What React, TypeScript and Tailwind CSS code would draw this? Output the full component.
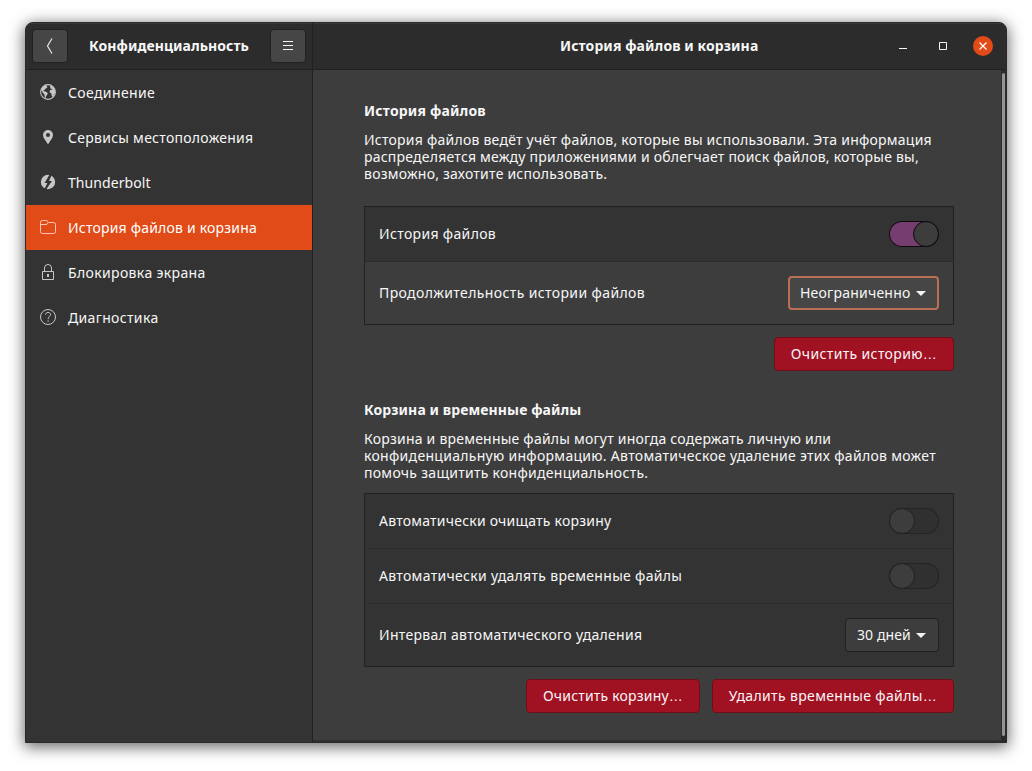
import React from "react";

function Globe() {
  return (
    <svg width="16" height="16" viewBox="0 0 16 16" fill="#c6c6c5">
      <circle cx="8" cy="8" r="7.400" fill="none" stroke="#c6c6c5" strokeWidth="1.100" />
      <path d="M1.200 5.400 3 2.600 5.400 1.200 7.200 1.600 6.800 2.600 7.400 3.400 6.400 4.200 5.400 4.800 4.600 6 3.600 6.200 3.800 7.200 5.600 7.400 7.800 9 7.200 10.800 6 12.200 5.800 14 4.800 13.400 4.400 10.600 2.800 8.800 1.800 6.800Z" />
      <path d="M10.400 1.400 12.800 2.600 14.600 5.400 15.200 8.400 14 11.400 12.400 13 11.600 11.600 11.600 9.800 9.800 8.400 9.600 6.800 10.800 5.800 12.200 6 11.800 4.800 10.600 4.800 10.200 3.400Z" />
    </svg>
  );
}

function Pin() {
  return (
    <svg width="16" height="16" viewBox="0 0 16 16" fill="#c6c6c5">
      <path fillRule="evenodd" d="M8 1a5 5 0 0 0-5 5c0 3.200 2.800 5.600 4.200 8.200.2.500.4.800.8.800s.6-.3.8-.8C10.200 11.600 13 9.200 13 6a5 5 0 0 0-5-5Zm0 3a2 2 0 1 1 0 4 2 2 0 0 1 0-4Z" />
    </svg>
  );
}

function Bolt() {
  return (
    <svg width="16" height="16" viewBox="0 0 16 16">
      <circle cx="8" cy="8" r="7.200" fill="#c6c6c5" />
      <path d="M9.800 0 4.600 8.900H7.400L4 16H5.800L12 7.100H9L12 .5Z" fill="#333333" />
    </svg>
  );
}

function Folder() {
  return (
    <svg width="16" height="16" viewBox="0 0 16 16" fill="none" stroke="#f8c9b8">
      <path d="M.5 12.500v-9a2 2 0 0 1 2-2h4a1 1 0 0 1 1 1v0a1 1 0 0 0 1 1h5a2 2 0 0 1 2 2v7a2 2 0 0 1-2 2h-11a2 2 0 0 1-2-2Z" />
      <path d="M.5 5.500H6a1.500 1.500 0 0 0 1.500-1.500" />
    </svg>
  );
}

function Lock() {
  return (
    <svg width="16" height="16" viewBox="0 0 16 16" fill="none" stroke="#c6c6c5">
      <path d="M2.500 7.500h11v8h-11zM4.500 7.500V4a3.500 3.500 0 0 1 7 0v3.500" />
      <path d="M7 10h2v3H7z" fill="#c6c6c5" stroke="none" />
    </svg>
  );
}

function Help() {
  return (
    <svg width="16" height="16" viewBox="0 0 16 16" fill="none" stroke="#c6c6c5">
      <circle cx="8" cy="8" r="7.500" />
      <path d="M5.600 5.600c.1-1.300 1-2.200 2.400-2.200s2.500.8 2.500 2.200c0 1.800-2.400 1.900-2.400 4.500" />
      <path d="M7.500 11.500h1.200v1.200H7.500z" fill="#c6c6c5" stroke="none" />
    </svg>
  );
}

const nav = [
  { label: "Соединение", Icon: Globe, cls: "tracking-[0.38px]" },
  { label: "Сервисы местоположения", Icon: Pin, cls: "tracking-[0.27px]" },
  { label: "Thunderbolt", Icon: Bolt, cls: "tracking-[0.08px]" },
  { label: "История файлов и корзина", Icon: Folder, cls: "tracking-[0.2px]", active: true },
  { label: "Блокировка экрана", Icon: Lock, cls: "tracking-[0.36px]" },
  { label: "Диагностика", Icon: Help, cls: "tracking-[0.34px]" },
];

function Switch({ on = false }: { on?: boolean }) {
  return (
    <div
      className={
        on
          ? "flex h-[26px] w-[50px] justify-end rounded-full bg-[#763e70] shadow-[inset_0_0_0_1px_#0b0b0b]"
          : "flex h-[26px] w-[50px] rounded-full bg-[#303030] shadow-[inset_0_0_0_1px_#242424]"
      }
    >
      <div
        className={
          on
            ? "size-[26px] rounded-full border border-[#0b0b0b] bg-[#3d3d3d]"
            : "size-[26px] rounded-full border border-[#212121] bg-[#3d3d3d]"
        }
      />
    </div>
  );
}

function Caret() {
  return (
    <svg width="10" height="5" viewBox="0 0 10 5" fill="#f3f3f2">
      <path d="M0 0h10L5 5Z" />
    </svg>
  );
}

function Row({ label, cls, children, light, tall }: { label: string; cls: string; children: React.ReactNode; light?: boolean; tall?: boolean }) {
  return (
    <div className={`flex items-center justify-between px-[14px] ${tall ? "h-[62px]" : "h-[55px]"} ${light ? "bg-[#3d3d3d]" : "bg-[#333333]"}`}>
      <span className={`${cls} ${tall ? "pb-px" : "pb-[2px]"}`}>{label}</span>
      {children}
    </div>
  );
}

function Danger({ label, size, cls }: { label: string; size: string; cls: string }) {
  return (
    <button className={`flex h-[34px] items-center justify-center rounded-[4px] border border-[#6f0d18] bg-[#a01122] pb-px text-[#f8f6f7] ${size}`}>
      <span className={cls}>
        {label}
        <span className="font-['Liberation_Sans',sans-serif] leading-none">…</span>
      </span>
    </button>
  );
}

export default function App() {
  return (
    <div className="h-[771px] w-[1032px] overflow-hidden bg-white pt-[22px] pl-[25px] font-['Noto_Sans',sans-serif] text-[14px] leading-[17px] whitespace-nowrap text-[#f7f7f7]">
      <div className="flex h-[721px] w-[982px] flex-col overflow-hidden rounded-t-[8px] border border-[#2b292a] bg-[#333333] shadow-[0_3px_15px_1px_rgba(0,0,0,0.6)]">
        <header className="flex h-[47px] shrink-0 border-b border-[#212121] bg-[#2c2c2c] shadow-[inset_0_1px_0_#393939]">
          <div className="flex w-[287px] items-center justify-between border-r border-[#212121] pr-[6px] pl-[6px]">
            <button className="flex h-[34px] w-[36px] items-center justify-center rounded-[4px] border border-[#212121] bg-[#464646]">
              <svg width="16" height="16" viewBox="0 0 16 16" fill="none" stroke="#e8e8e8" strokeWidth="1.200"><path d="M10 .5 5.500 8l4.500 7.500" /></svg>
            </button>
            <span className="pb-[2px] font-bold tracking-[0.06px]">Конфиденциальность</span>
            <button className="flex h-[34px] w-[36px] items-center justify-center rounded-[4px] border border-[#212121] bg-[#464646] pb-[2px]">
              <svg width="10" height="9" viewBox="0 0 10 9" fill="#f7f7f7"><path d="M0 0h10v1H0zM0 4h10v1H0zM0 8h10v1H0z" /></svg>
            </button>
          </div>
          <div className="flex flex-1 items-center">
            <span className="ml-[247px] w-[198px] pb-[2px] font-bold tracking-[0.09px]">История файлов и корзина</span>
            <div className="ml-auto flex items-center pr-[13px]">
              <svg width="8" height="8" viewBox="0 0 8 8" fill="#f7f7f7"><path d="M0 6h8v1H0z" /></svg>
              <svg className="ml-8" width="8" height="8" viewBox="0 0 8 8" fill="none" stroke="#f7f7f7"><path d="M.5.5h7v7h-7z" /></svg>
              <div className="ml-[26px] flex size-5 items-center justify-center rounded-full bg-[#e04b18]">
                <svg width="8" height="8" viewBox="0 0 8 8" stroke="#fff" strokeWidth="1.200"><path d="m.5.500 7 7M7.500.500l-7 7" /></svg>
              </div>
            </div>
          </div>
        </header>
        <div className="flex min-h-0 flex-1">
          <nav className="w-[287px] border-r border-[#212121] bg-[#333333]">
            {nav.map(({ label, Icon, cls, active }) => (
              <div key={label} className={`flex h-[45px] items-center gap-3 pl-[14px] ${active ? "bg-[#e04b18] text-white" : ""}`}>
                <span className="pb-px"><Icon /></span>
                <span className={cls}>{label}</span>
              </div>
            ))}
          </nav>
          <main className="min-w-0 flex-1 border-b-2 border-[#2f2f2f] bg-[#3d3d3d] pt-[32px] pl-[51px]">
            <section className="w-[590px]">
              <h2 className="font-bold tracking-[0.18px]">История файлов</h2>
              <p className="mt-3">
                <span className="block tracking-[0.235px]">История файлов ведёт учёт файлов, которые вы использовали. Эта информация</span>
                <span className="block tracking-[0.225px]">распределяется между приложениями и облегчает поиск файлов, которые вы,</span>
                <span className="block tracking-[0.23px]">возможно, захотите использовать.</span>
              </p>
              <div className="mt-[24px] divide-y divide-[#2d2d2d] border border-[#212121]">
                <Row label="История файлов" cls="tracking-[0.34px]"><Switch on /></Row>
                <Row label="Продолжительность истории файлов" cls="tracking-[0.38px]" light tall>
                  <button className="flex h-[34px] w-[151px] items-center justify-between rounded-[4px] border-2 border-[#b96f53] bg-[#464646] pr-[11px] pl-[10px]">
                    <span className="pb-[2px] tracking-[0.22px]">Неограниченно</span>
                    <Caret />
                  </button>
                </Row>
              </div>
              <div className="mt-3 flex justify-end">
                <Danger label="Очистить историю" size="w-[180px]" cls="tracking-[0.36px]" />
              </div>
            </section>
            <section className="mt-[30px] w-[590px]">
              <h2 className="font-bold tracking-[0.09px]">Корзина и временные файлы</h2>
              <p className="mt-3">
                <span className="block tracking-[0.22px]">Корзина и временные файлы могут иногда содержать личную или</span>
                <span className="block tracking-[0.3px]">конфиденциальную информацию. Автоматическое удаление этих файлов может</span>
                <span className="block tracking-[0.28px]">помочь защитить конфиденциальность.</span>
              </p>
              <div className="mt-[12px] divide-y divide-[#2d2d2d] border border-[#212121]">
                <Row label="Автоматически очищать корзину" cls="tracking-[0.22px]"><Switch /></Row>
                <Row label="Автоматически удалять временные файлы" cls="tracking-[0.31px]"><Switch /></Row>
                <Row label="Интервал автоматического удаления" cls="tracking-[0.3px]" tall>
                  <button className="flex h-[34px] w-[94px] items-center justify-between rounded-[4px] border border-[#212121] bg-[#3d3d3d] pr-3 pl-[11px]">
                    <span className="pb-[2px] tracking-[0.1px]">30 дней</span>
                    <Caret />
                  </button>
                </Row>
              </div>
              <div className="mt-3 flex justify-end gap-3">
                <Danger label="Очистить корзину" size="w-[174px]" cls="tracking-[0.2px]" />
                <Danger label="Удалить временные файлы" size="w-[242px]" cls="tracking-[0.36px]" />
              </div>
            </section>
          </main>
          <div className="w-[5px] bg-[#2b2b2b] pt-[3px] pl-px">
            <div className="h-[663px] w-[3px] rounded-full bg-[#949494]" />
          </div>
        </div>
      </div>
    </div>
  );
}
